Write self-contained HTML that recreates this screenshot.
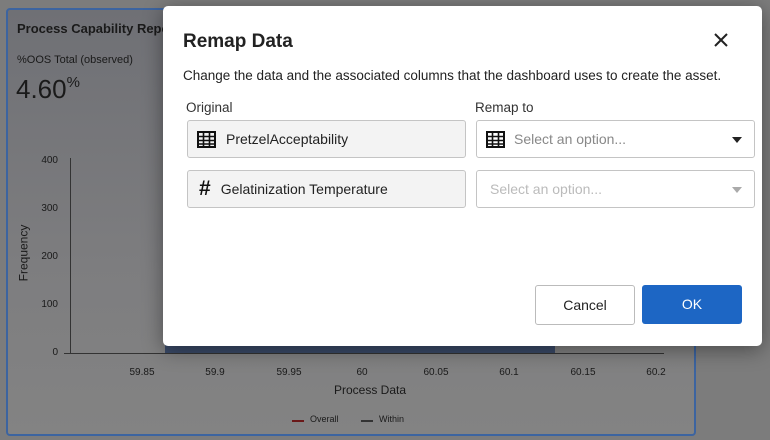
<!DOCTYPE html>
<html><head><style>
body{margin:0;width:770px;height:440px;overflow:hidden;font-family:"Liberation Sans",sans-serif;background:#7c7c7c;position:relative}
.a{position:absolute}
.card{left:6px;top:8px;width:686px;height:424px;border:2px solid #3c64a0;border-radius:4px;background:linear-gradient(#6f7075,#7d7d7f 60%,#838383)}
.t{font-size:10px;color:#1a1a1a}
.x{transform:translateX(-50%);top:367px}
.y{width:18px;text-align:right;left:40px}
.dlg{left:163px;top:6px;width:599px;height:340px;background:#fff;border-radius:5px;box-shadow:0 4px 20px rgba(0,0,0,.4)}
.box{border:1px solid #c4c4c4;border-radius:3px;height:38px;box-sizing:border-box;font-size:14px;display:flex;align-items:center}
</style></head><body>
<div class="a card"></div>
<div class="a" style="left:17px;top:21px;font-size:13px;font-weight:bold;color:#1a1a1a">Process Capability Report</div>
<div class="a" style="left:17px;top:54px;font-size:11px;color:#1a1a1a">%OOS Total (observed)</div>
<div class="a" style="left:16px;top:74px;font-size:26px;color:#1a1a1a">4.60<span style="font-size:15px;vertical-align:top">%</span></div>
<div class="a" style="left:70px;top:158px;width:1px;height:196px;background:#333"></div>
<div class="a" style="left:64px;top:353px;width:600px;height:1px;background:#333"></div>
<div class="a t y" style="top:155px">400</div>
<div class="a t y" style="top:203px">300</div>
<div class="a t y" style="top:251px">200</div>
<div class="a t y" style="top:299px">100</div>
<div class="a t y" style="top:347px">0</div>
<div class="a" style="left:-5px;top:246px;transform:rotate(-90deg);font-size:12px;color:#1a1a1a">Frequency</div>
<div class="a" style="left:165px;top:344px;width:390px;height:9px;background:#3a4a68"></div>
<div class="a t x" style="left:142px">59.85</div>
<div class="a t x" style="left:215px">59.9</div>
<div class="a t x" style="left:289px">59.95</div>
<div class="a t x" style="left:362px">60</div>
<div class="a t x" style="left:436px">60.05</div>
<div class="a t x" style="left:509px">60.1</div>
<div class="a t x" style="left:583px">60.15</div>
<div class="a t x" style="left:656px">60.2</div>
<div class="a" style="left:370px;top:383px;transform:translateX(-50%);font-size:12px;color:#1a1a1a">Process Data</div>
<div class="a" style="left:292px;top:420px;width:12px;height:2px;background:#6a1818"></div>
<div class="a" style="left:310px;top:414px;font-size:9px;color:#1a1a1a">Overall</div>
<div class="a" style="left:361px;top:420px;width:12px;height:2px;background:#333"></div>
<div class="a" style="left:379px;top:414px;font-size:9px;color:#1a1a1a">Within</div>

<div class="a dlg">
<div class="a" style="left:20px;top:25px;font-size:19px;font-weight:bold;color:#222">Remap Data</div>
<svg class="a" style="left:550px;top:26px" width="16" height="16" viewBox="0 0 16 16"><path d="M2 2L14 14M14 2L2 14" stroke="#222" stroke-width="2"/></svg>
<div class="a" style="left:20px;top:62px;font-size:13.5px;color:#222">Change the data and the associated columns that the dashboard uses to create the asset.</div>
<div class="a" style="left:23px;top:94px;font-size:13.5px;color:#333">Original</div>
<div class="a" style="left:312px;top:94px;font-size:13.5px;color:#333">Remap to</div>
<div class="a box" style="left:24px;top:114px;width:279px;background:#f3f3f3">
<svg style="margin:0 10px 0 9px" width="19" height="17" viewBox="0 0 19 17"><rect x="1" y="1" width="17" height="15" fill="none" stroke="#111" stroke-width="2"/><path d="M1 5.5H18M1 9.5H18M1 13H18M6.5 1V16M12.5 1V16" stroke="#111" stroke-width="1.6"/></svg><span style="color:#222">PretzelAcceptability</span></div>
<div class="a box" style="left:24px;top:164px;width:279px;background:#f3f3f3">
<span style="margin:0 10px 0 11px;font-size:21px;font-weight:bold;color:#111">#</span><span style="color:#222">Gelatinization Temperature</span></div>
<div class="a box" style="left:313px;top:114px;width:279px">
<svg style="margin:0 9px 0 9px" width="19" height="17" viewBox="0 0 19 17"><rect x="1" y="1" width="17" height="15" fill="none" stroke="#111" stroke-width="2"/><path d="M1 5.5H18M1 9.5H18M1 13H18M6.5 1V16M12.5 1V16" stroke="#111" stroke-width="1.6"/></svg><span style="color:#888">Select an option...</span>
<svg style="position:absolute;right:12px;top:16px" width="10" height="6"><path d="M0 0H10L5 6Z" fill="#222"/></svg></div>
<div class="a box" style="left:313px;top:164px;width:279px">
<span style="margin-left:13px;color:#bbb">Select an option...</span>
<svg style="position:absolute;right:12px;top:16px" width="10" height="6"><path d="M0 0H10L5 6Z" fill="#aaa"/></svg></div>
<div class="a" style="left:372px;top:279px;width:100px;height:40px;border:1px solid #bbb;border-radius:3px;box-sizing:border-box;font-size:14px;color:#222;text-align:center;line-height:38px">Cancel</div>
<div class="a" style="left:479px;top:279px;width:100px;height:39px;background:#1d66c4;border-radius:3px;font-size:14px;color:#fff;text-align:center;line-height:39px">OK</div>
</div>
</body></html>
